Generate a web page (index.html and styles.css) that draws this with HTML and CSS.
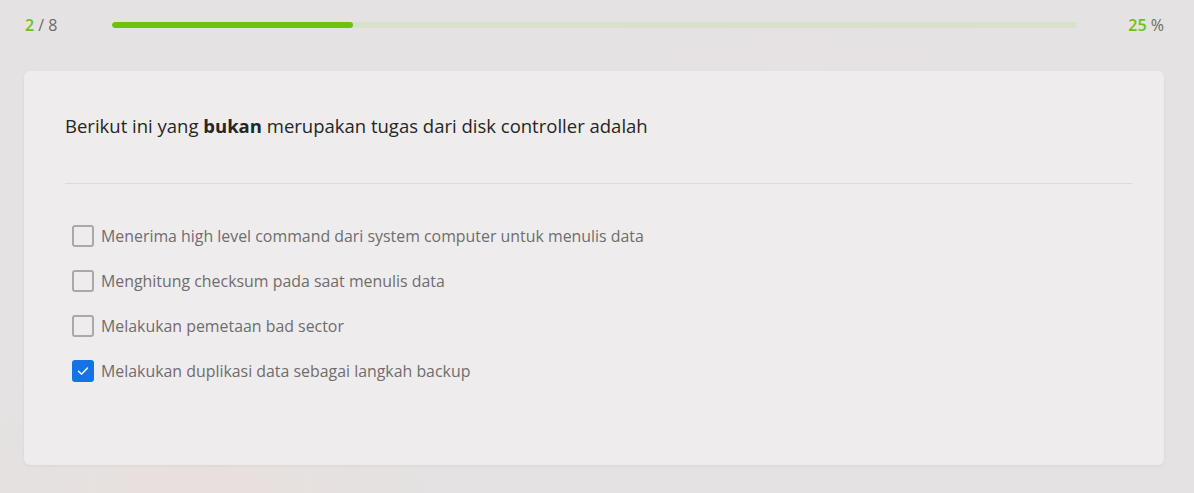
FILE: index.html
```html
<!DOCTYPE html>
<html lang="id">
<head>
<meta charset="utf-8">
<title>Quiz</title>
<link rel="stylesheet" href="styles.css">
</head>
<body>
<div class="page">
  <header class="progress">
    <div class="count"><span class="cur">2</span> / 8</div>
    <div class="track"><div class="fill" style="width:25%"></div></div>
    <div class="pct"><span class="cur">25</span> %</div>
  </header>
  <main class="card">
    <p class="question">Berikut ini yang <b>bukan</b> merupakan tugas dari disk controller adalah</p>
    <hr class="divider">
    <ul class="options">
      <li class="option"><span class="box"></span><span class="label">Menerima high level command dari system computer untuk menulis data</span></li>
      <li class="option"><span class="box"></span><span class="label">Menghitung checksum pada saat menulis data</span></li>
      <li class="option"><span class="box"></span><span class="label">Melakukan pemetaan bad sector</span></li>
      <li class="option"><span class="box checked"><svg viewBox="0 0 22 22" width="22" height="22"><path d="M6.5 11.3l3 3 6-6.3" fill="none" stroke="#fff" stroke-width="1.4" stroke-linecap="round" stroke-linejoin="round"/></svg></span><span class="label">Melakukan duplikasi data sebagai langkah backup</span></li>
    </ul>
  </main>
</div>
</body>
</html>
```

FILE: styles.css
```css
* { box-sizing: border-box; }
html, body { margin: 0; height: 100%; }
body {
  font-family: "Open Sans", Lato, sans-serif;
  background:
    radial-gradient(ellipse 500px 300px at 800px 200px, rgba(240,225,225,0.6), transparent 70%),
    radial-gradient(ellipse 400px 250px at 200px 490px, rgba(235,222,218,0.6), transparent 70%),
    #e4e2e3;
  color: #222;
}
.page { padding: 13px 30px 0 24px; }
.progress {
  display: flex;
  align-items: center;
  height: 24px;
}
.count {
  width: 88px;
  font-size: 16px;
  color: #6a6a6a;
  padding-left: 1px;
}
.cur { color: #6cc20c; font-weight: 600; }
.track {
  flex: 1;
  height: 6px;
  border-radius: 3px;
  background: #d7e2cd;
  overflow: hidden;
}
.fill { height: 100%; background: #6cc20c; border-radius: 3px; }
.pct {
  width: 87px;
  text-align: right;
  font-size: 16px;
  color: #6a6a6a;
}
.card {
  margin-top: 34px;
  width: 1140px;
  height: 394px;
  background: #eeeced;
  border-radius: 6px;
  box-shadow: 0 1px 3px rgba(0,0,0,0.06);
  padding: 43px 32px 0 41px;
}
.question {
  margin: 0;
  font-size: 18.5px;
  line-height: 24px;
  color: #262626;
}
.question b { font-weight: 700; }
.divider {
  margin: 45px 0 0;
  border: 0;
  border-top: 1px solid #dcdadb;
}
.options {
  list-style: none;
  margin: 41px 0 0;
  padding: 0 0 0 7px;
  display: flex;
  flex-direction: column;
  gap: 23px;
}
.option {
  display: flex;
  align-items: center;
  height: 22px;
  gap: 7px;
}
.box {
  width: 22px;
  height: 22px;
  border: 2px solid #a9a9a9;
  border-radius: 3px;
  flex: none;
  display: flex;
}
.box.checked {
  background: #1673e6;
  border-color: #1673e6;
}
.box.checked svg { margin: -2px; }
.label {
  font-size: 15.9px;
  color: #6f6d6e;
}
```
